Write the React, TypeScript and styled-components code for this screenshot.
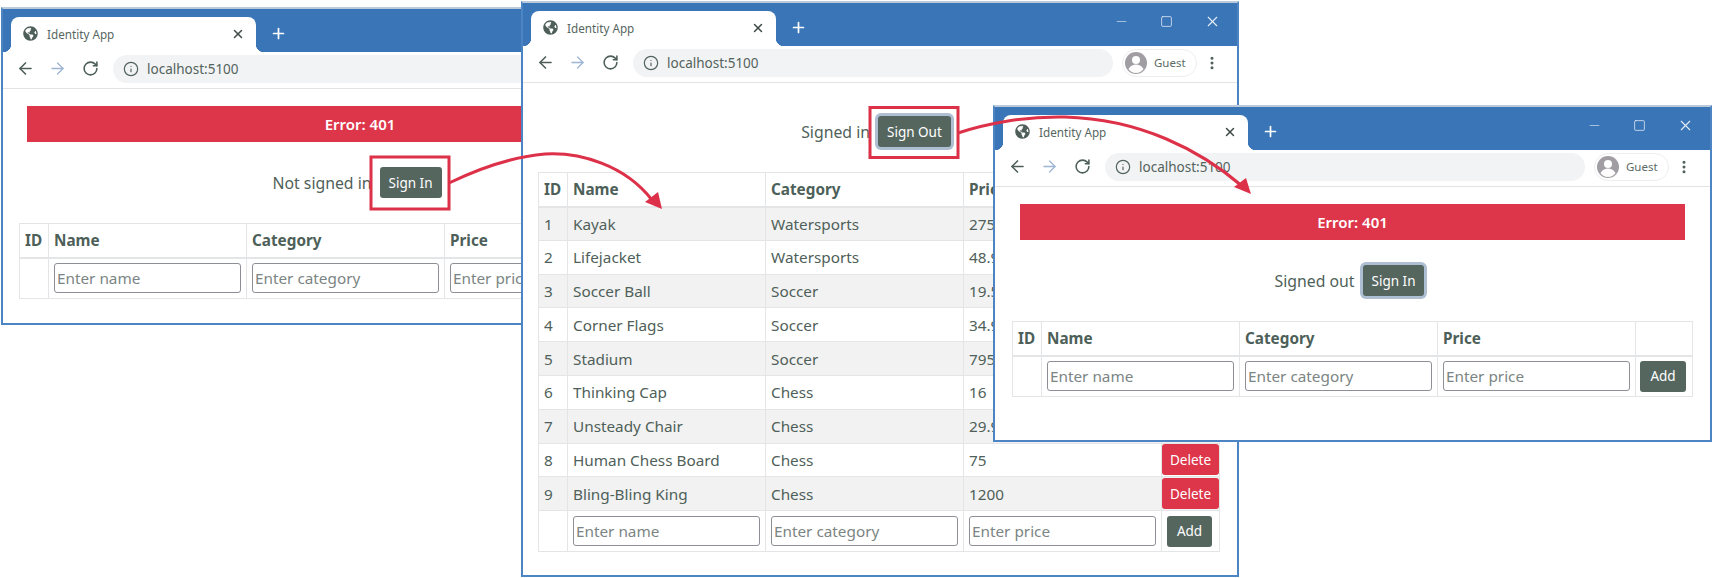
import React from "react";
import styled, { createGlobalStyle } from "styled-components";
import { ArrowLeft, ArrowRight, RotateCw, Info, X, Plus, Minus, Square, EllipsisVertical } from "lucide-react";
import { FaGlobeAmericas } from "react-icons/fa";

const Global = createGlobalStyle`
  html, body { margin: 0; padding: 0; background: #fff; }
  body { font-family: "Noto Sans", "Open Sans", sans-serif; color: #4f5f59; }
  * { box-sizing: border-box; }
`;

const Stage = styled.div`
  position: relative;
  width: 1713px;
  height: 578px;
  overflow: hidden;
  background: #fff;
`;

const Frame = styled.section<{ $x: number; $y: number; $h: number }>`
  position: absolute;
  left: ${(p) => p.$x}px;
  top: ${(p) => p.$y}px;
  width: ${(p) => (p.$x === 521 ? 718 : 719)}px;
  height: ${(p) => p.$h}px;
  display: flex;
  flex-direction: column;
  background: #fff;
  border: 2px solid #4c84c4;
  border-top: 2px solid #bccbdc;
`;

const TabStrip = styled.div`
  height: 43px;
  flex: none;
  background: #3a75b7;
  display: flex;
  align-items: flex-end;
  padding-left: 8px;
  color: #fff;
`;

const Tab = styled.div`
  position: relative;
  width: 245px;
  height: 35px;
  background: #fff;
  border-radius: 8px 8px 0 0;
  display: flex;
  align-items: center;
  padding: 0 11px 2px 12px;
  gap: 9px;
  color: #56665f;
  font-size: 11.7px;
  &::before, &::after {
    content: "";
    position: absolute;
    bottom: 0;
    width: 8px;
    height: 8px;
  }
  &::before { left: -8px; background: radial-gradient(circle at 0 0, transparent 8px, #fff 8.5px); }
  &::after { right: -8px; background: radial-gradient(circle at 100% 0, transparent 8px, #fff 8.5px); }
`;

const TabTitle = styled.span`
  flex: 1;
`;

const NewTab = styled.div`
  display: flex;
  align-items: center;
  height: 35px;
  padding-bottom: 2px;
  margin-left: 14px;
`;

const WinControls = styled.div`
  margin-left: auto;
  align-self: flex-start;
  display: flex;
  align-items: center;
  gap: 31px;
  padding: 7px 16px 0 0;
  height: 30px;
  color: #e6eef8;
`;

const Toolbar = styled.div`
  height: 37px;
  flex: none;
  display: flex;
  align-items: center;
  padding: 0 0 3px 13px;
  border-bottom: 1px solid #e3e3e3;
  color: #4d5f58;
`;

const NavIcon = styled.span<{ $muted?: boolean }>`
  display: flex;
  width: 19px;
  margin-right: 13px;
  color: ${(p) => (p.$muted ? "#9db4d3" : "#4d5f58")};
`;

const ReloadIcon = styled(NavIcon)`
  margin-left: 2px;
  margin-right: 10px;
`;

const Address = styled.div`
  width: 480px;
  height: 28px;
  flex: none;
  margin-left: 2px;
  border-radius: 14px;
  background: #f2f3f4;
  display: flex;
  align-items: center;
  padding-left: 10px;
  gap: 8px;
  font-size: 13.5px;
  color: #53635d;
`;

const Guest = styled.div`
  margin-left: 9px;
  width: 75px;
  height: 28px;
  border: 1px solid #eeeeee;
  border-radius: 14px;
  display: flex;
  align-items: center;
  gap: 6px;
  padding-left: 1px;
  font-size: 11.5px;
  color: #5a6a64;
`;

const Kebab = styled.span`
  display: flex;
  margin-left: 7px;
`;

const Content = styled.main<{ $top: number; $left: number }>`
  padding: ${(p) => p.$top}px 17px 0 ${(p) => p.$left}px;
`;

const ErrorBar = styled.div`
  height: 36px;
  margin: 7px 8px 0;
  background: #dd3549;
  color: #fff;
  font-size: 15px;
  font-weight: 600;
  display: flex;
  align-items: center;
  justify-content: center;
`;

const Actions = styled.div`
  height: 81px;
  display: flex;
  align-items: center;
  justify-content: center;
  font-size: 15.8px;
  padding-right: 6px;
`;

const Btn = styled.button<{ $tone?: "slate" | "red"; $ring?: boolean }>`
  border: 0;
  font-family: inherit;
  font-size: 13.5px;
  height: 31px;
  border-radius: 3px;
  color: #fff;
  cursor: pointer;
  padding: 0 10px;
  background: ${(p) => (p.$tone === "red" ? "#dd3549" : "#55665f")};
  ${(p) => (p.$ring ? "box-shadow: 0 0 0 3px #aebfd3;" : "")}
`;

const SessionBtn = styled(Btn)`
  margin-left: 8px;
  padding: 0 9px;
`;

const Grid = styled.table`
  width: 100%;
  table-layout: fixed;
  border-collapse: collapse;
  font-size: 15.3px;
`;

const Th = styled.th<{ $w?: number }>`
  ${(p) => (p.$w ? `width: ${p.$w}px;` : "")}
  height: 34px;
  padding: 0 5px;
  border: 1px solid #e3e5e7;
  border-bottom-width: 2px;
  text-align: left;
  font-weight: 700;
  color: #4d5f58;
  white-space: nowrap;
`;

const Td = styled.td`
  height: 33.8px;
  padding: 0 5px;
  border: 1px solid #e3e5e7;
`;

const ActionTd = styled(Td)`
  padding: 0;
  text-align: center;
`;

const Row = styled.tr<{ $odd?: boolean }>`
  background: ${(p) => (p.$odd ? "#f2f2f2" : "#fff")};
`;

const EntryTd = styled.td`
  height: 41px;
  padding: 0 5px;
  border: 1px solid #e3e5e7;
`;

const AddTd = styled(EntryTd)`
  padding: 0 2px 0 0;
  text-align: center;
`;

const Field = styled.input`
  display: block;
  width: 100%;
  height: 30px;
  border: 1.5px solid #8e8e96;
  border-radius: 3px;
  padding: 0 2px;
  font-family: inherit;
  font-size: 15.3px;
  background: #fff;
  &::placeholder { color: #7b8583; opacity: 1; }
`;

const DeleteBtn = styled(Btn)`
  width: 100%;
  padding: 0;
  display: block;
`;

const Overlay = styled.svg`
  position: absolute;
  inset: 0;
  pointer-events: none;
`;

function Avatar() {
  return (
    <svg width="24" height="24" viewBox="0 0 24 24">
      <circle cx="12" cy="12" r="11" fill="#a09ea2" />
      <circle cx="12" cy="9" r="4" fill="#fff" />
      <path d="M4.500 18c2-3.400 5-4.400 7.500-4.400s5.500 1 7.500 4.400A10 10 0 0 1 12 22a10 10 0 0 1-7.500-4z" fill="#fff" />
    </svg>
  );
}

const products: [number, string, string, string][] = [
  [1, "Kayak", "Watersports", "275"],
  [2, "Lifejacket", "Watersports", "48.95"],
  [3, "Soccer Ball", "Soccer", "19.5"],
  [4, "Corner Flags", "Soccer", "34.95"],
  [5, "Stadium", "Soccer", "79500"],
  [6, "Thinking Cap", "Chess", "16"],
  [7, "Unsteady Chair", "Chess", "29.95"],
  [8, "Human Chess Board", "Chess", "75"],
  [9, "Bling-Bling King", "Chess", "1200"],
];

function ProductTable({ rows }: { rows: typeof products }) {
  return (
    <Grid>
      <thead>
        <tr>
          <Th $w={29}>ID</Th>
          <Th $w={198}>Name</Th>
          <Th $w={198}>Category</Th>
          <Th $w={198}>Price</Th>
          <Th />
        </tr>
      </thead>
      <tbody>
        {rows.map(([id, name, cat, price], i) => (
          <Row key={id} $odd={i % 2 === 0}>
            <Td>{id}</Td>
            <Td>{name}</Td>
            <Td>{cat}</Td>
            <Td>{price}</Td>
            <ActionTd>
              <DeleteBtn $tone="red">Delete</DeleteBtn>
            </ActionTd>
          </Row>
        ))}
        <tr>
          <EntryTd />
          <EntryTd>
            <Field placeholder="Enter name" />
          </EntryTd>
          <EntryTd>
            <Field placeholder="Enter category" />
          </EntryTd>
          <EntryTd>
            <Field placeholder="Enter price" />
          </EntryTd>
          <AddTd>
            <Btn>Add</Btn>
          </AddTd>
        </tr>
      </tbody>
    </Grid>
  );
}

type BrowserProps = {
  x: number;
  y: number;
  h: number;
  top: number;
  left: number;
  error?: boolean;
  status: string;
  action: string;
  ring?: boolean;
  rows: typeof products;
};

function Browser({ x, y, h, top, left, error, status, action, ring, rows }: BrowserProps) {
  return (
    <Frame $x={x} $y={y} $h={h}>
      <TabStrip>
        <Tab>
          <FaGlobeAmericas size={15} color="#4d5f58" />
          <TabTitle>Identity App</TabTitle>
          <X size={14} strokeWidth={2.5} color="#3f4a46" />
        </Tab>
        <NewTab>
          <Plus size={17} strokeWidth={2.4} />
        </NewTab>
        <WinControls>
          <Minus size={15} strokeWidth={1} />
          <Square size={13} strokeWidth={1.4} />
          <X size={17} strokeWidth={1.5} />
        </WinControls>
      </TabStrip>
      <Toolbar>
        <NavIcon>
          <ArrowLeft size={19} strokeWidth={2} />
        </NavIcon>
        <NavIcon $muted>
          <ArrowRight size={19} strokeWidth={1.6} />
        </NavIcon>
        <ReloadIcon>
          <RotateCw size={17} strokeWidth={2.2} />
        </ReloadIcon>
        <Address>
          <Info size={16} strokeWidth={1.8} />
          localhost:5100
        </Address>
        <Guest>
          <Avatar />
          Guest
        </Guest>
        <Kebab>
          <EllipsisVertical size={16} strokeWidth={2.5} />
        </Kebab>
      </Toolbar>
      <Content $top={top} $left={left}>
        {error && <ErrorBar>Error: 401</ErrorBar>}
        <Actions>
          {status}
          <SessionBtn $ring={ring}>{action}</SessionBtn>
        </Actions>
        <ProductTable rows={rows} />
      </Content>
    </Frame>
  );
}

export default function App() {
  return (
    <Stage>
      <Global />
      <Browser x={1} y={7} h={318} top={10} left={16} error status="Not signed in" action="Sign In" rows={[]} />
      <Browser x={521} y={1} h={576} top={8} left={15} status="Signed in" action="Sign Out" ring rows={products} />
      <Browser x={993} y={105} h={337} top={10} left={17} error status="Signed out" action="Sign In" ring rows={[]} />
      <Overlay width="1713" height="578" viewBox="0 0 1713 578">
        <g fill="none" stroke="#dc3148" strokeWidth="3">
          <rect x="371" y="157" width="78" height="52" />
          <rect x="870" y="107.500" width="88" height="50" />
          <path d="M449 183 C480 168 510 157 545 154 C580 152 625 165 652 200" />
          <path d="M958 133 C985 124 1025 116 1065 117 C1140 119 1200 150 1242 186" />
        </g>
        <g fill="#dc3148">
          <polygon points="662,209 645,202 658,192" />
          <polygon points="1251,194 1234,187 1246,178" />
        </g>
      </Overlay>
    </Stage>
  );
}
